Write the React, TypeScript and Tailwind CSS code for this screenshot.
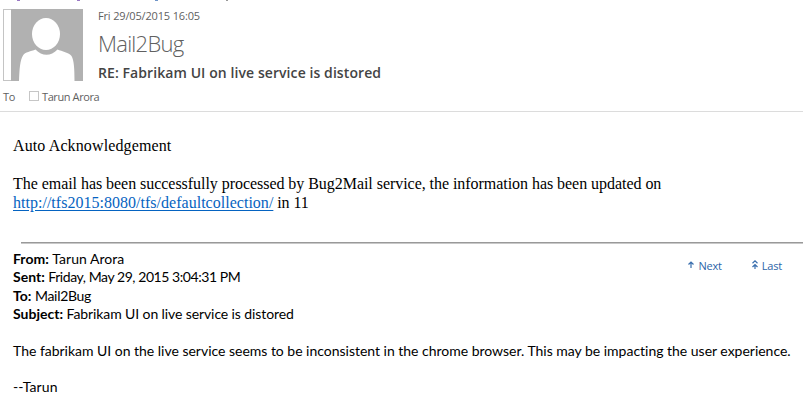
const quoted: [string, string, string][] = [
  ['From:', 'Tarun Arora', 'tracking-[0.02px]'],
  ['Sent:', 'Friday, May 29, 2015 3:04:31 PM', 'tracking-[-0.44px]'],
  ['To:', 'Mail2Bug', 'tracking-[-0.3px]'],
  ['Subject:', 'Fabrikam UI on live service is distored', 'tracking-[-0.1px]'],
];

function Avatar() {
  return (
    <svg className="block h-[72px] w-20 shrink-0" viewBox="0 0 80 72">
      <rect x="0.5" y="0.5" width="8" height="71" fill="#fff" stroke="#c4c4c4" />
      <rect x="8" width="72" height="72" fill="#b1b1b1" />
      <ellipse cx="43" cy="25" rx="14" ry="16" fill="#fff" />
      <path d="M16 72C16.500 60 17 51 20 46.500C22 43 28 42.500 32.500 40.500C39 47.500 48 47.500 54.500 40.500C59 42.500 66 43.500 68.500 47C71 51 71.500 60 71.500 72Z" fill="#fff" />
    </svg>
  );
}

function NextIcon() {
  return (
    <svg className="mt-[3px] h-[7px] w-[6px]" viewBox="0 0 6 7" fill="none" stroke="#3a6fae" strokeWidth="1.2">
      <path d="M3 7V1M0.500 3.500L3 1L5.500 3.500" />
    </svg>
  );
}

function LastIcon() {
  return (
    <svg className="mt-[2px] h-[9px] w-[6px]" viewBox="0 0 6 9" fill="none" stroke="#3a6fae" strokeWidth="1.2">
      <path d="M0.500 3.200L3 0.900L5.500 3.200M3 9V4.500M0.500 7L3 4.500L5.500 7" />
    </svg>
  );
}

export default function App() {
  return (
    <main className="relative h-[401px] w-[803px] overflow-hidden bg-white font-['Open_Sans','Noto_Sans',sans-serif]">
      <div className="absolute top-0 left-0 h-px w-full">
        <i className="absolute left-[17px] h-px w-[3px] bg-[#9a78c4]" />
        <i className="absolute left-[77px] h-px w-[3px] bg-[#9a78c4]" />
        <i className="absolute left-[155px] h-px w-[3px] bg-[#6f95c8]" />
        <i className="absolute left-[226px] h-px w-[2px] bg-[#999]" />
      </div>
      <header className="flex h-[81px] pt-[9px] pl-[3px]">
        <Avatar />
        <div className="-mt-px pl-[15px] whitespace-nowrap">
          <p className="h-5 text-[11px] leading-[15px] tracking-[-0.16px] text-[#5f5f5f]">Fri 29/05/2015 16:05</p>
          <h1 className="h-[35px] text-[22px] leading-[30px] font-light tracking-[-0.75px] text-[#606060]">Mail2Bug</h1>
          <h2 className="text-[14px] leading-[19px] font-semibold tracking-[0.08px] text-[#444]">RE: Fabrikam UI on live service is distored</h2>
        </div>
      </header>
      <div className="flex h-[31px] border-b border-[#dcdcdc] pt-2 pl-[3px] text-[11px] leading-[15px] text-[#5f5f5f]">
        <span className="w-[26px] tracking-[-0.4px]">To</span>
        <i className="mt-[2px] mr-[3px] size-[10px] border border-[#c6c6c6]" />
        <span className="tracking-[-0.4px]">Tarun Arora</span>
      </div>
      <section className="h-[130px] pt-6 pl-[13px] font-['Liberation_Serif',serif] text-[16px] leading-[19px] whitespace-nowrap text-black">
        <p className="mb-[19px] tracking-[0.12px]">Auto Acknowledgement</p>
        <p className="tracking-[-0.045px]">The email has been successfully processed by Bug2Mail service, the information has been updated on</p>
        <p><a className="tracking-[0.02px] text-[#0563c1] underline underline-offset-2">http://tfs2015:8080/tfs/defaultcollection/</a><span className="tracking-[-0.1px]"> in 11</span></p>
      </section>
      <hr className="ml-[21px] h-[2px] border-0 border-b border-[#c8c8c8] bg-[#999]" />
      <section className="flex justify-between pt-[6px] pl-[13px]">
        <div className="font-['Lato',sans-serif] text-[14px] leading-[18.33px] whitespace-nowrap text-black">
          {quoted.map(([label, value, tracking]) => (
            <p key={label}><b>{label}</b> <span className={tracking}>{value}</span></p>
          ))}
          <p className="mt-[18.33px] w-0 tracking-[-0.015px]">The fabrikam UI on the live service seems to be inconsistent in the chrome browser. This may be impacting the user experience.</p>
          <p className="mt-[18.33px] tracking-[0.1px]">--Tarun</p>
        </div>
        <nav className="flex h-[15px] pt-2 pr-[21px] text-[11px] leading-[15px] tracking-[-0.2px] text-[#2b65a8]">
          <a className="mr-[30px] flex gap-[4px]"><NextIcon />Next</a>
          <a className="flex gap-[4px]"><LastIcon />Last</a>
        </nav>
      </section>
    </main>
  );
}
